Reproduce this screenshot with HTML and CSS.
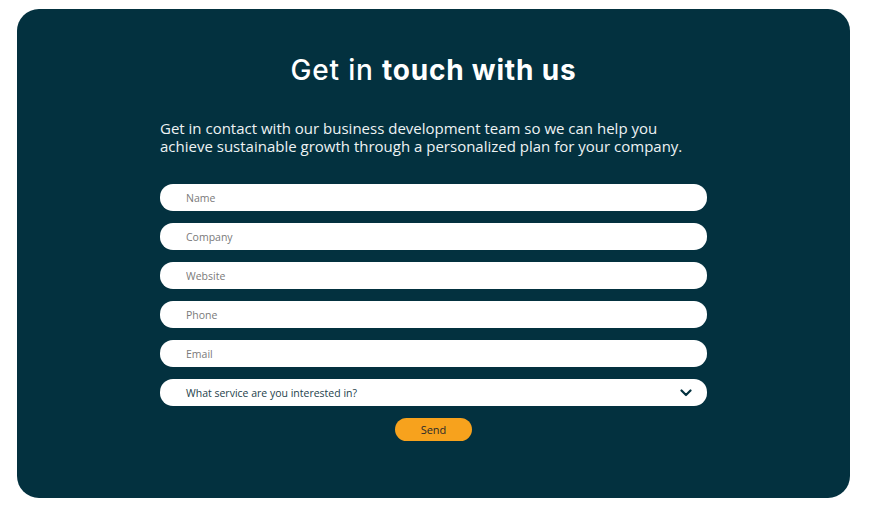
FILE: index.html
```html
<!DOCTYPE html>
<html lang="en">
<head>
<meta charset="utf-8">
<title>Contact</title>
<link rel="stylesheet" href="styles.css">
</head>
<body>
<div class="page">
  <section class="card">
    <h1 class="title">Get in <strong>touch with us</strong></h1>
    <div class="content">
      <p class="intro">Get in contact with our business development team so we can help you achieve sustainable growth through a personalized plan for your company.</p>
      <form class="form">
        <input class="field" type="text" placeholder="Name">
        <input class="field" type="text" placeholder="Company">
        <input class="field" type="text" placeholder="Website">
        <input class="field" type="text" placeholder="Phone">
        <input class="field" type="text" placeholder="Email">
        <div class="field select">
          <span>What service are you interested in?</span>
          <svg class="chevron" width="12" height="8" viewBox="0 0 12 8"><path d="M1.5 1.5 L6 6 L10.5 1.5" fill="none" stroke="#03313f" stroke-width="2.2" stroke-linecap="round" stroke-linejoin="round"/></svg>
        </div>
        <button class="send" type="button">Send</button>
      </form>
    </div>
  </section>
</div>
</body>
</html>
```
FILE: styles.css
```css
html, body {
  margin: 0;
  padding: 0;
  background: #ffffff;
}
.page {
  padding: 9px 0 0 17px;
}
.card {
  width: 833px;
  height: 489px;
  box-sizing: border-box;
  background: #03313f;
  border-radius: 22px;
  padding-top: 43px;
  font-family: "Open Sans", sans-serif;
}
.title {
  margin: 0;
  text-align: center;
  color: #ffffff;
  font-family: "Inter", "Noto Sans", sans-serif;
  font-weight: 500;
  font-size: 28px;
  line-height: 36px;
  letter-spacing: 0.8px;
}
.title strong {
  font-weight: 700;
}
.content {
  width: 547px;
  margin: 0 auto;
}
.intro {
  margin: 31px 0 0 0;
  color: #eef3f4;
  font-size: 15px;
  line-height: 18px;
}
.form {
  margin-top: 29px;
  display: flex;
  flex-direction: column;
  gap: 12px;
}
.field {
  display: block;
  box-sizing: border-box;
  width: 547px;
  height: 27px;
  border: none;
  border-radius: 13px;
  background: #ffffff;
  padding: 0 0 0 26px;
  font-family: "Open Sans", sans-serif;
  font-size: 10.5px;
  color: #333;
  outline: none;
}
.field::placeholder {
  color: #7a7a7a;
}
.select {
  display: flex;
  align-items: center;
  justify-content: space-between;
  padding-right: 15px;
  color: #1d3f4b;
}
.chevron {
  display: block;
}
.send {
  align-self: center;
  width: 77px;
  height: 23px;
  border: none;
  border-radius: 12px;
  background: #f7a21d;
  color: #2a2a2a;
  font-family: "Open Sans", sans-serif;
  font-size: 11px;
  padding: 0;
}
```
